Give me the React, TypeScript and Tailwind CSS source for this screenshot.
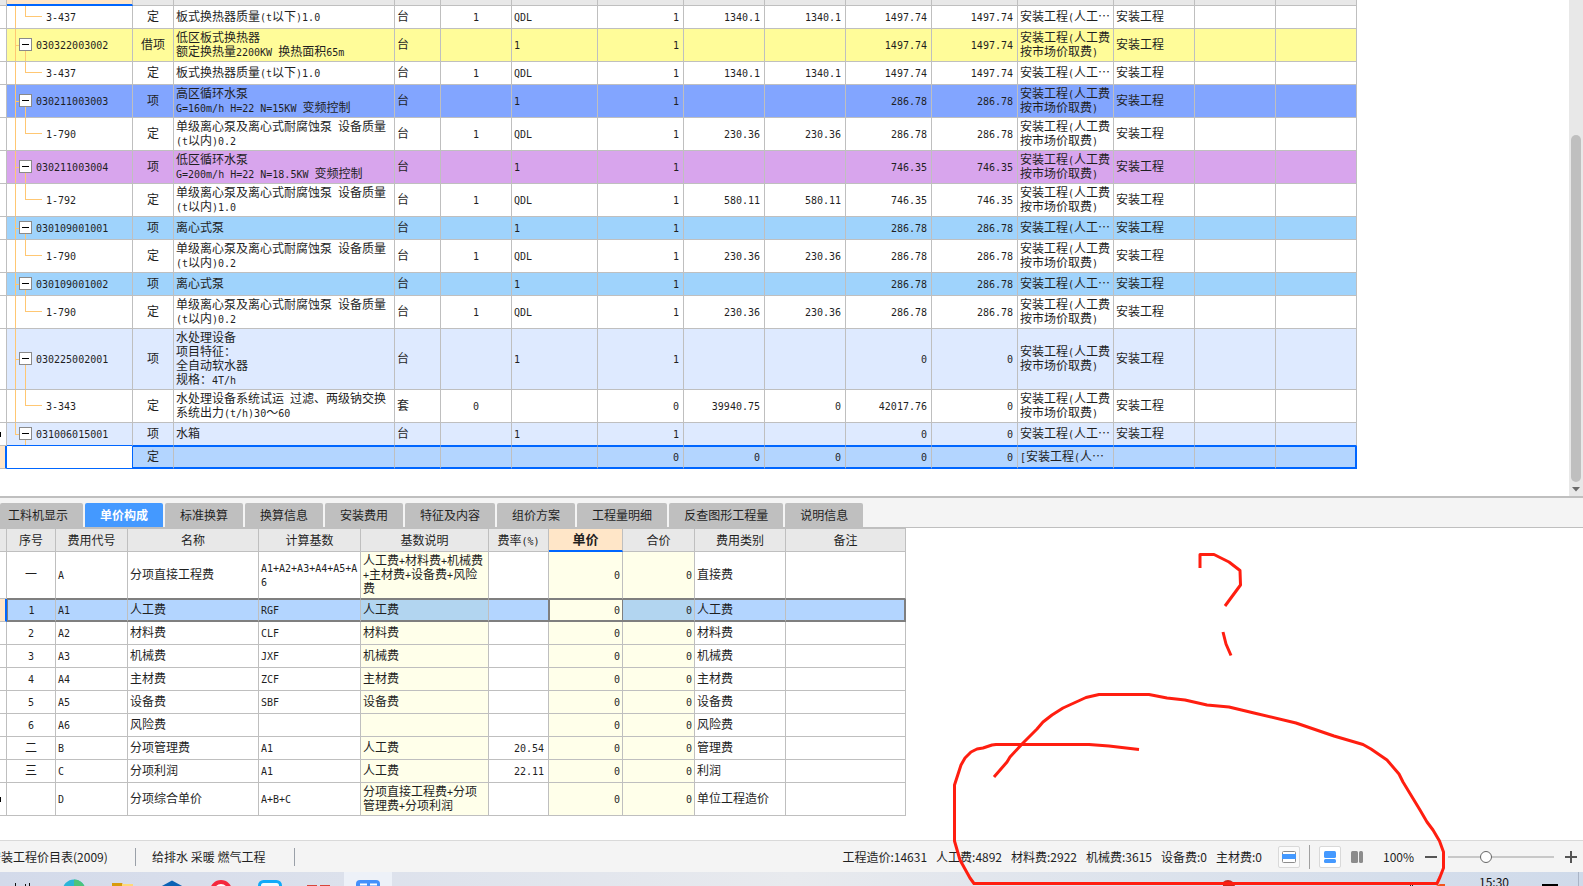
import React, { useState } from "react";

interface BillRow {
    code: string;
    child?: boolean;
    kind: string;
    name: string;
    unit: string;
    content: string;
    expr: string;
    qty: string;
    price: string;
    total: string;
    unitPrice: string;
    sumPrice: string;
    fee: string;
    major: string;
    color: string;
}

interface FeeRow {
    no: string;
    code: string;
    name: string;
    base: string;
    desc: string;
    rate: string;
    kind: string;
}

const FEE_SHORT = "安装工程(人工…";
const FEE_LONG = "安装工程(人工费\n按市场价取费)";
const PUMP = "单级离心泵及离心式耐腐蚀泵 设备质量\n(t以内)";

const billRows: BillRow[] = [
    { code: "3-437", child: true, kind: "定", name: "板式换热器质量(t以下)1.0", unit: "台", content: "1", expr: "QDL", qty: "1", price: "1340.1", total: "1340.1", unitPrice: "1497.74", sumPrice: "1497.74", fee: FEE_SHORT, major: "安装工程", color: "bg-white" },
    { code: "030322003002", kind: "借项", name: "低区板式换热器\n额定换热量2200KW 换热面积65m", unit: "台", content: "", expr: "1", qty: "1", price: "", total: "", unitPrice: "1497.74", sumPrice: "1497.74", fee: FEE_LONG, major: "安装工程", color: "bg-[#fffc99]" },
    { code: "3-437", child: true, kind: "定", name: "板式换热器质量(t以下)1.0", unit: "台", content: "1", expr: "QDL", qty: "1", price: "1340.1", total: "1340.1", unitPrice: "1497.74", sumPrice: "1497.74", fee: FEE_SHORT, major: "安装工程", color: "bg-white" },
    { code: "030211003003", kind: "项", name: "高区循环水泵\nG=160m/h H=22 N=15KW 变频控制", unit: "台", content: "", expr: "1", qty: "1", price: "", total: "", unitPrice: "286.78", sumPrice: "286.78", fee: FEE_LONG, major: "安装工程", color: "bg-[#82a5ff]" },
    { code: "1-790", child: true, kind: "定", name: PUMP + "0.2", unit: "台", content: "1", expr: "QDL", qty: "1", price: "230.36", total: "230.36", unitPrice: "286.78", sumPrice: "286.78", fee: FEE_LONG, major: "安装工程", color: "bg-white" },
    { code: "030211003004", kind: "项", name: "低区循环水泵\nG=200m/h H=22 N=18.5KW 变频控制", unit: "台", content: "", expr: "1", qty: "1", price: "", total: "", unitPrice: "746.35", sumPrice: "746.35", fee: FEE_LONG, major: "安装工程", color: "bg-[#d8a5ed]" },
    { code: "1-792", child: true, kind: "定", name: PUMP + "1.0", unit: "台", content: "1", expr: "QDL", qty: "1", price: "580.11", total: "580.11", unitPrice: "746.35", sumPrice: "746.35", fee: FEE_LONG, major: "安装工程", color: "bg-white" },
    { code: "030109001001", kind: "项", name: "离心式泵", unit: "台", content: "", expr: "1", qty: "1", price: "", total: "", unitPrice: "286.78", sumPrice: "286.78", fee: FEE_SHORT, major: "安装工程", color: "bg-[#9fd3fc]" },
    { code: "1-790", child: true, kind: "定", name: PUMP + "0.2", unit: "台", content: "1", expr: "QDL", qty: "1", price: "230.36", total: "230.36", unitPrice: "286.78", sumPrice: "286.78", fee: FEE_LONG, major: "安装工程", color: "bg-white" },
    { code: "030109001002", kind: "项", name: "离心式泵", unit: "台", content: "", expr: "1", qty: "1", price: "", total: "", unitPrice: "286.78", sumPrice: "286.78", fee: FEE_SHORT, major: "安装工程", color: "bg-[#9fd3fc]" },
    { code: "1-790", child: true, kind: "定", name: PUMP + "0.2", unit: "台", content: "1", expr: "QDL", qty: "1", price: "230.36", total: "230.36", unitPrice: "286.78", sumPrice: "286.78", fee: FEE_LONG, major: "安装工程", color: "bg-white" },
    { code: "030225002001", kind: "项", name: "水处理设备\n项目特征：\n全自动软水器\n规格：4T/h", unit: "台", content: "", expr: "1", qty: "1", price: "", total: "", unitPrice: "0", sumPrice: "0", fee: FEE_LONG, major: "安装工程", color: "bg-[#deeaff]" },
    { code: "3-343", child: true, kind: "定", name: "水处理设备系统试运 过滤、两级钠交换\n系统出力(t/h)30～60", unit: "套", content: "0", expr: "", qty: "0", price: "39940.75", total: "0", unitPrice: "42017.76", sumPrice: "0", fee: FEE_LONG, major: "安装工程", color: "bg-white" },
    { code: "031006015001", kind: "项", name: "水箱", unit: "台", content: "", expr: "1", qty: "1", price: "", total: "", unitPrice: "0", sumPrice: "0", fee: FEE_SHORT, major: "安装工程", color: "bg-[#deeaff]" },
];

const feeRows: FeeRow[] = [
    { no: "一", code: "A", name: "分项直接工程费", base: "A1+A2+A3+A4+A5+A\n6", desc: "人工费+材料费+机械费\n+主材费+设备费+风险\n费", rate: "", kind: "直接费" },
    { no: "1", code: "A1", name: "人工费", base: "RGF", desc: "人工费", rate: "", kind: "人工费" },
    { no: "2", code: "A2", name: "材料费", base: "CLF", desc: "材料费", rate: "", kind: "材料费" },
    { no: "3", code: "A3", name: "机械费", base: "JXF", desc: "机械费", rate: "", kind: "机械费" },
    { no: "4", code: "A4", name: "主材费", base: "ZCF", desc: "主材费", rate: "", kind: "主材费" },
    { no: "5", code: "A5", name: "设备费", base: "SBF", desc: "设备费", rate: "", kind: "设备费" },
    { no: "6", code: "A6", name: "风险费", base: "", desc: "", rate: "", kind: "风险费" },
    { no: "二", code: "B", name: "分项管理费", base: "A1", desc: "人工费", rate: "20.54", kind: "管理费" },
    { no: "三", code: "C", name: "分项利润", base: "A1", desc: "人工费", rate: "22.11", kind: "利润" },
    { no: "", code: "D", name: "分项综合单价", base: "A+B+C", desc: "分项直接工程费+分项\n管理费+分项利润", rate: "", kind: "单位工程造价" },
];

const tabs = ["工料机显示", "单价构成", "标准换算", "换算信息", "安装费用", "特征及内容", "组价方案", "工程量明细", "反查图形工程量", "说明信息"];
const feeHeads = ["序号", "费用代号", "名称", "计算基数", "基数说明", "费率(%)", "单价", "合价", "费用类别", "备注"];
const totals = ["工程造价:14631", "人工费:4892", "材料费:2922", "机械费:3615", "设备费:0", "主材费:0"];

const CELL = "h-[23px] whitespace-pre border-r border-b border-[#bfbfbf] px-0.5 pt-px pb-[3px] leading-[14px]";

// Latin runs go in a half-width mono face so they line up with the Chinese glyphs
function Txt({ s }: { s: string }) {
    return (
        <>
            {s.split(/([\x20-\x7e]+)/).map((part, i) =>
                i % 2 === 1 ? (
                    <span key={i} className="font-['DejaVu_Sans_Mono',monospace] text-[10px] leading-none">{part}</span>
                ) : (
                    part
                )
            )}
        </>
    );
}

function TreeCell({ row, last }: { row: BillRow; last: boolean }) {
    return (
        <div className="flex items-center">
            <span className={"absolute top-0 left-2 w-px bg-[#ffc773] " + (last ? "h-1/2" : "h-full")} />
            {row.child ? (
                <>
                    <span className="absolute top-0 left-[18px] h-1/2 w-[17px] border-b border-l border-[#ffc773]" />
                    <span className="pl-[37px]"><Txt s={row.code} /></span>
                </>
            ) : (
                <>
                    <span className="absolute top-1/2 left-2 h-px w-1 bg-[#ffc773]" />
                    <span className="absolute top-1/2 left-[18px] h-1/2 w-px bg-[#ffc773]" />
                    <button aria-label="折叠" className="relative ml-2.5 flex h-[13px] w-[13px] items-center justify-center border border-[#8a8a8a] bg-white">
                        <span className="h-px w-[7px] bg-black" />
                    </button>
                    <span className="pl-1"><Txt s={row.code} /></span>
                </>
            )}
        </div>
    );
}

function BillTable() {
    return (
        <table className="w-[1357px] shrink-0 table-fixed border-separate border-spacing-0">
            <colgroup>
                <col className="w-[7px]" />
                <col className="w-[126px]" />
                <col className="w-[41px]" />
                <col className="w-[221px]" />
                <col className="w-[46px]" />
                <col className="w-[71px]" />
                <col className="w-[86px]" />
                <col className="w-[86px]" />
                <col className="w-[81px]" />
                <col className="w-[81px]" />
                <col className="w-[86px]" />
                <col className="w-[86px]" />
                <col className="w-[96px]" />
                <col className="w-[81px]" />
                <col className="w-[81px]" />
                <col className="w-[81px]" />
            </colgroup>
            <thead>
                <tr>
                    {Array.from({ length: 16 }, (_, i) => (
                        <th
                            key={i}
                            className={
                                i === 1
                                    ? "h-1.5 border-r border-b-2 border-r-[#bfbfbf] border-b-[#0066ff] bg-[#ffe6c8] p-0"
                                    : "h-1.5 border-r border-b border-[#bfbfbf] bg-[#e8e8e8] p-0"
                            }
                        />
                    ))}
                </tr>
            </thead>
            <tbody>
                {billRows.map((r, i) => {
                    const last = i === billRows.length - 1;
                    const cell = CELL + (last ? " border-b-[#0066ff] " : " ");
                    return (
                        <tr key={i} className={r.color}>
                            <td className="border-r border-b border-[#bfbfbf] bg-white p-0">
                                {last && <span className="block h-[5px] w-px bg-black" />}
                            </td>
                            <td className={cell + "relative"}><TreeCell row={r} last={last} /></td>
                            <td className={cell + "text-center"}><Txt s={r.kind} /></td>
                            <td className={cell}><Txt s={r.name} /></td>
                            <td className={cell}><Txt s={r.unit} /></td>
                            <td className={cell + "text-center"}><Txt s={r.content} /></td>
                            <td className={cell}><Txt s={r.expr} /></td>
                            <td className={cell + "pr-1 text-right"}><Txt s={r.qty} /></td>
                            <td className={cell + "pr-1 text-right"}><Txt s={r.price} /></td>
                            <td className={cell + "pr-1 text-right"}><Txt s={r.total} /></td>
                            <td className={cell + "pr-1 text-right"}><Txt s={r.unitPrice} /></td>
                            <td className={cell + "pr-1 text-right"}><Txt s={r.sumPrice} /></td>
                            <td className={cell}><Txt s={r.fee} /></td>
                            <td className={cell}><Txt s={r.major} /></td>
                            <td className={cell} />
                            <td className={cell} />
                        </tr>
                    );
                })}
                <tr className="bg-[#b3d5ff]">
                    <td className="border-r-2 border-b border-r-[#0066ff] border-b-[#bfbfbf] bg-[#ffe6c8] p-0" />
                    <td className="border-r border-b border-[#0066ff] bg-white p-0" />
                    {["定", "", "", "", "", "0", "0", "0", "0", "0", "[安装工程(人…", "", "", ""].map((v, i) => (
                        <td
                            key={i}
                            className={
                                "h-[23px] border-t border-b-2 border-y-[#0066ff] px-0.5 pt-px pb-[3px] leading-[14px] whitespace-pre " +
                                (i === 13 ? "border-r-2 border-r-[#0066ff] " : "border-r border-r-[#bfbfbf] ") +
                                (i === 0 ? "text-center" : i > 4 && i < 10 ? "pr-1 text-right" : "")
                            }
                        >
                            <Txt s={v} />
                        </td>
                    ))}
                </tr>
            </tbody>
        </table>
    );
}

function FeeTable() {
    return (
        <table className="w-[906px] table-fixed border-separate border-spacing-0 border-t border-[#bfbfbf]">
            <colgroup>
                <col className="w-[7px]" />
                <col className="w-[49px]" />
                <col className="w-[72px]" />
                <col className="w-[131px]" />
                <col className="w-[102px]" />
                <col className="w-[128px]" />
                <col className="w-[60px]" />
                <col className="w-[74px]" />
                <col className="w-[72px]" />
                <col className="w-[91px]" />
                <col className="w-[120px]" />
            </colgroup>
            <thead>
                <tr className="bg-[#e8e8e8]">
                    <th className="border-r border-b border-[#bfbfbf] p-0" />
                    {feeHeads.map((h) => (
                        <th
                            key={h}
                            className={
                                h === "单价"
                                    ? "h-[23px] border-r border-b-2 border-r-[#bfbfbf] border-b-[#0066ff] bg-[#ffe6c8] p-0 pb-0.5 text-[13px] leading-[14px] font-bold"
                                    : "h-[23px] border-r border-b border-[#bfbfbf] p-0 leading-[14px] font-normal"
                            }
                        >
                            <Txt s={h} />
                        </th>
                    ))}
                </tr>
            </thead>
            <tbody>
                {feeRows.map((r, i) => {
                    const sel = i === 1;
                    const edge = sel ? "border-t border-b-2 border-y-[#7f7f7f] " : i === 0 ? "border-b-[#7f7f7f] " : "";
                    const cell = CELL + " " + edge;
                    const yellow = sel ? "bg-[#b2d5f0] " : "bg-[#ffffea] ";
                    return (
                        <tr key={i} className={sel ? "bg-[#b3d5ff]" : "bg-white"}>
                            <td className={sel ? "border-r-2 border-b border-r-[#0066ff] border-b-[#bfbfbf] bg-[#ffe6c8] p-0" : "border-r border-b border-[#bfbfbf] p-0"}>
                                {i === 9 && <span className="block h-[5px] w-px bg-black" />}
                            </td>
                            <td className={cell + "text-center " + (sel ? "border-l border-l-[#7f7f7f]" : "")}><Txt s={r.no} /></td>
                            <td className={cell}><Txt s={r.code} /></td>
                            <td className={cell}><Txt s={r.name} /></td>
                            <td className={cell}><Txt s={r.base} /></td>
                            <td className={cell + yellow}><Txt s={r.desc} /></td>
                            <td className={cell + "pr-1 text-right " + (sel ? "border-r-[#7f7f7f]" : "")}><Txt s={r.rate} /></td>
                            <td className={cell + "bg-[#ffffea] pr-0.5 text-right " + (sel ? "border-x border-x-[#7f7f7f]" : "")}><Txt s="0" /></td>
                            <td className={cell + yellow + "text-right"}><Txt s="0" /></td>
                            <td className={cell}><Txt s={r.kind} /></td>
                            <td className={cell + (sel ? "border-r-2 border-r-[#7f7f7f]" : "")} />
                        </tr>
                    );
                })}
            </tbody>
        </table>
    );
}

function Taskbar() {
    return (
        <footer className="flex h-[14px] shrink-0 justify-between overflow-hidden bg-linear-to-r from-[#d3daea] via-[#e8eaee] to-[#cfdaea]">
            <svg width="400" height="14" viewBox="0 0 400 14">
                <path d="M15.5 11v3M25.5 12v2M29.5 11v3" stroke="#111" />
                <circle cx="74" cy="19" r="11.5" fill="#2bb5d8" />
                <path d="M74 7.500a11.500 11.500 0 0 1 11 8H74z" fill="#4cc47a" />
                <path d="M112 11h10l2 3h-12z" fill="#d99b0c" />
                <path d="M122 12h11v2h-11z" fill="#ffd977" />
                <path d="M172 8.500l11 6h-22z" fill="#0b62b5" />
                <circle cx="221" cy="19" r="9" fill="#fff" stroke="#f5283c" strokeWidth="4" />
                <rect x="259.500" y="9.500" width="21" height="20" rx="4" fill="#eefaff" stroke="#10aaf8" strokeWidth="3" />
                <path d="M307 13.500h10M320 13.500h10" stroke="#d9453a" />
                <rect x="344" width="48" height="14" fill="#edf1f8" />
                <rect x="356" y="8" width="24" height="22" rx="4" fill="#4391fb" />
                <path d="M360 12.500h7M370 12.500h7" stroke="#fff" strokeWidth="2" />
            </svg>
            <div className="flex">
                <svg width="240" height="14" viewBox="0 0 240 14">
                    <circle cx="5" cy="15" r="7" fill="#c8281c" />
                    <path d="M-8 14c2-2 5-2 8-2v2z" fill="#f5a623" />
                    <path d="M187.500 13v1M189.500 12v2" stroke="#222" />
                    <path d="M213 14l4-2h5v2z" fill="#f2541b" />
                </svg>
                <time className="pt-0.5 pr-[33px] pl-4 text-[12px] leading-4 text-[#111]">15:30</time>
                <span className="mt-3 mr-5 h-0.5 w-4 bg-black" />
                <span className="mr-1 w-px bg-[#aab4c6]" />
            </div>
        </footer>
    );
}

function PenMarks() {
    return (
        <svg className="pointer-events-none absolute top-0 left-0" width="1583" height="886" viewBox="0 0 1583 886" fill="none" stroke="#ff1e10" strokeWidth="3" strokeLinejoin="round">
            <path d="M1200 568V554.500H1214L1219 557L1229 562L1240 570.500L1240.500 585L1225 606" />
            <path d="M1223 632L1226 644L1231 655.500" />
            <path d="M994 777L1007 762L1010 757L1023 743L1037 729L1043 722L1052 715L1063 708L1086 697.500L1099 694.500H1149L1167 698L1185 700L1207 705L1229 707L1254 713L1296 723L1334 736L1363 744.500L1371 749L1387 760L1399 774L1403 782L1420 810L1427 822L1433 830L1439.500 841L1443.500 852V868L1440 877L1437 883.500H974L970 878L960 860L954.500 841V785L961 765L965 758L971 752L977 749L983 748L992 745L996 744.500H1089L1109 746L1139 749.500" />
        </svg>
    );
}

export default function App() {
    const [active, setActive] = useState("单价构成");
    const [zoom, setZoom] = useState(34);

    return (
        <div className="relative flex h-screen flex-col overflow-hidden bg-white font-['Noto_Sans_CJK_SC',sans-serif] text-[12px] text-[#1f1f1f]">
            <section className="flex shrink-0 justify-between overflow-hidden border-b-2 border-[#bfbfbf]">
                <div className="pb-[27px]">
                    <BillTable />
                </div>
                <div className="flex w-[14px] shrink-0 flex-col items-center bg-[#e8e8e8] pt-[135px]">
                    <div className="w-2.5 flex-1 rounded-full bg-[#bfbfbf]" />
                    <svg className="h-[14px] w-2" viewBox="0 0 8 14">
                        <path d="M0 5h8L4 9.500z" fill="#6b6b6b" />
                    </svg>
                </div>
            </section>

            <section className="min-h-0 flex-1 overflow-hidden">
                <div role="tablist" className="flex gap-0.5 border-b border-[#bfbfbf] bg-[#f4f4f4] pt-[5px]">
                    {tabs.map((t, i) => (
                        <button
                            key={t}
                            role="tab"
                            aria-selected={t === active}
                            onClick={() => setActive(t)}
                            className={
                                "h-6 rounded-t-xs pr-[15px] whitespace-nowrap " +
                                (i === 0 ? "pl-2 " : "pl-[15px] ") +
                                (t === active ? "bg-[#4499ff] font-bold text-white" : "bg-[#bfbfbf]")
                            }
                        >
                            {t}
                        </button>
                    ))}
                </div>
                <FeeTable />
            </section>

            <div className="flex h-8 shrink-0 items-center justify-between border-t border-[#d9d9d9] bg-[#f4f4f4] pr-1.5 whitespace-nowrap">
                <div className="flex items-center">
                    <span className="-ml-[11px] w-[146px]">安装工程价目表(2009)</span>
                    <span className="h-[18px] w-px bg-[#9aa0a8]" />
                    <span className="w-[158px] pl-4">给排水 采暖 燃气工程</span>
                    <span className="h-[18px] w-px bg-[#9aa0a8]" />
                </div>
                <div className="flex items-center">
                    <div className="flex gap-[9px] pr-4">
                        {totals.map((t) => (
                            <span key={t}>{t}</span>
                        ))}
                    </div>
                    <button aria-label="单行视图" className="flex h-[22px] w-[22px] items-center justify-center rounded-xs border border-[#d9d9d9] bg-[#fafafa]">
                        <svg width="14" height="12" viewBox="0 0 14 12">
                            <rect x="0.500" y="0.500" width="13" height="11" rx="1" fill="#fff" stroke="#8c8c8c" />
                            <rect y="3" width="14" height="5" fill="#4499ff" />
                        </svg>
                    </button>
                    <span className="mx-[9px] h-6 w-px bg-[#a0a0a0]" />
                    <button aria-label="上下布局" className="flex h-[22px] w-[22px] items-center justify-center rounded-xs border border-[#d9d9d9] bg-white">
                        <svg width="12" height="12" viewBox="0 0 12 12" fill="#4499ff">
                            <rect width="12" height="7" rx="1.500" />
                            <rect y="8" width="12" height="4" rx="1.500" />
                        </svg>
                    </button>
                    <button aria-label="左右布局" className="pl-2.5">
                        <svg width="12" height="12" viewBox="0 0 12 12" fill="#8c8c8c">
                            <rect width="7" height="12" rx="1.500" />
                            <rect x="8" width="4" height="12" rx="1.500" />
                        </svg>
                    </button>
                    <label htmlFor="zoom" className="w-[62px] pl-5">100%</label>
                    <button aria-label="缩小">
                        <svg width="12" height="12" viewBox="0 0 12 12"><path d="M0 6h12" stroke="#555" strokeWidth="2" /></svg>
                    </button>
                    <input
                        id="zoom"
                        type="range"
                        value={zoom}
                        onChange={(e) => setZoom(Number(e.target.value))}
                        className="mx-[11px] h-3 w-[106px] appearance-none bg-transparent [&::-webkit-slider-runnable-track]:h-0.5 [&::-webkit-slider-runnable-track]:bg-[#c8c8c8] [&::-webkit-slider-thumb]:-mt-[5px] [&::-webkit-slider-thumb]:h-3 [&::-webkit-slider-thumb]:w-3 [&::-webkit-slider-thumb]:appearance-none [&::-webkit-slider-thumb]:rounded-full [&::-webkit-slider-thumb]:border [&::-webkit-slider-thumb]:border-[#666] [&::-webkit-slider-thumb]:bg-white"
                    />
                    <button aria-label="放大">
                        <svg width="12" height="12" viewBox="0 0 12 12"><path d="M0 6h12M6 0v12" stroke="#555" strokeWidth="2" /></svg>
                    </button>
                </div>
            </div>

            <Taskbar />
            <PenMarks />
        </div>
    );
}
